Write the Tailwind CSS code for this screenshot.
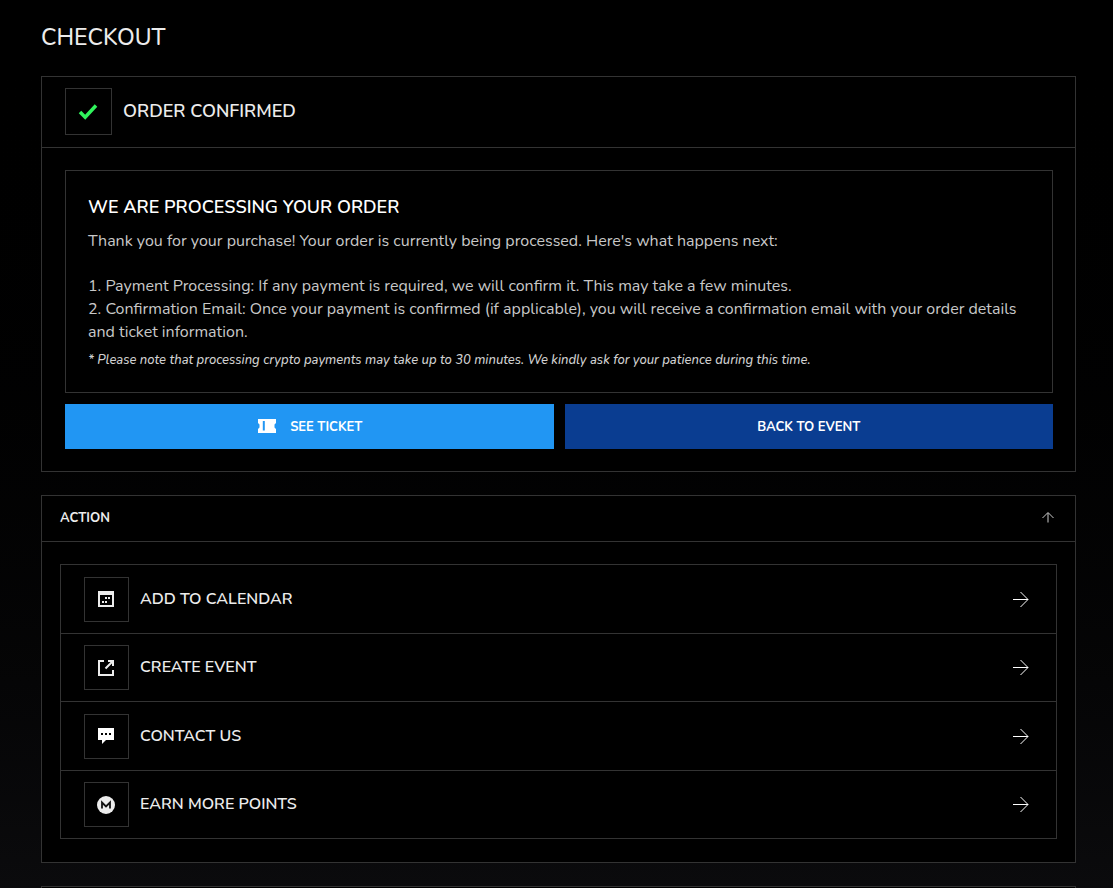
<!DOCTYPE html>
<html lang="en">
<head>
<meta charset="utf-8">
<meta name="viewport" content="width=device-width, initial-scale=1">
<title>Checkout</title>
<script src="https://cdn.jsdelivr.net/npm/@tailwindcss/browser@4"></script>
</head>
<body class="flex h-screen flex-col overflow-hidden bg-linear-to-b from-black to-[#0b0b0d] pr-[37px] pl-[41px] font-['Nunito','Noto_Sans',sans-serif] text-[#ececec]">
  <h1 class="pt-5 text-[23px] leading-9 font-medium">CHECKOUT</h1>

  <main class="mt-5 flex min-h-0 flex-1 flex-col gap-[23px]">
    <section class="shrink-0 border border-[#333] bg-black">
      <header class="flex items-center gap-[11px] border-b border-[#333] px-[23px] pt-[11px] pb-3">
        <span class="flex size-[47px] items-center justify-center border border-[#333]">
          <svg class="size-[23px]" viewBox="0 0 23 23" fill="none" stroke="#30f45c" stroke-width="3.500" aria-hidden="true"><path d="M3 12l5.200 5.200L19 5.500"/></svg>
        </span>
        <h2 class="pb-0.5 text-lg leading-7 font-semibold">ORDER CONFIRMED</h2>
      </header>
      <div class="py-[22px] pr-[22px] pl-[23px]">
        <div class="border border-[#333] p-[22px]">
          <h3 class="text-lg leading-7 font-semibold text-white">WE ARE PROCESSING YOUR ORDER</h3>
          <p class="mt-[9px] text-base leading-[23px] text-[#c8c8c8]">Thank you for your purchase! Your order is currently being processed. Here's what happens next:</p>
          <p class="mt-[22px] text-base leading-[23px] text-[#c8c8c8]">1. Payment Processing: If any payment is required, we will confirm it. This may take a few minutes.<br>2. Confirmation Email: Once your payment is confirmed (if applicable), you will receive a confirmation email with your order details and ticket information.</p>
          <p class="mt-1.5 text-[13px] leading-5 font-medium text-[#d0d0d0] italic">* Please note that processing crypto payments may take up to 30 minutes. We kindly ask for your patience during this time.</p>
        </div>
        <div class="mt-[11px] grid grid-cols-2 gap-[11px] text-[13px] font-bold text-white">
          <button type="button" class="flex h-[45px] items-center justify-center gap-3 bg-[#2196f3]">
            <svg class="size-[22px]" viewBox="0 0 22 22" fill="#fff" aria-hidden="true"><path fill-rule="evenodd" d="M2 3h18v4l-1.500 1.500v3L20 13v4H2v-4l1.500-1.500v-3L2 7zM6.800 5v9.500h2V5z"/></svg>
            <span class="pt-0.5">SEE TICKET</span>
          </button>
          <button type="button" class="flex h-[45px] items-center justify-center bg-[#0a3d91]"><span class="pt-0.5">BACK TO EVENT</span></button>
        </div>
      </div>
    </section>

    <section class="shrink-0 border border-[#333] bg-black">
      <h2 class="border-b border-[#333]">
        <button type="button" aria-expanded="true" class="flex h-[45px] w-full items-center justify-between px-[18px] pb-px text-[13px] font-bold">
          <span class="pt-px">ACTION</span>
          <svg class="size-[18px]" viewBox="0 0 18 18" fill="none" stroke="#ccc" aria-hidden="true"><path d="M9 13.500V4M3.500 9L9 3.500 14.500 9"/></svg>
        </button>
      </h2>
      <div class="px-[18px] pt-[22px] pb-[23px]">
        <nav class="divide-y divide-[#333] border border-[#333] font-semibold">
          <a href="#calendar" class="flex items-center gap-[11px] pt-3 pr-[26px] pb-[11px] pl-[23px]">
            <span class="flex size-[45px] items-center justify-center border border-[#333]">
              <svg class="size-[17px]" viewBox="0 0 17 17" fill="#ececec" aria-hidden="true"><path fill-rule="evenodd" d="M0 0h16v16H0zM2 4v10h12V4z"/><path d="M7 6h2v2H7zM10 6h2v2h-2zM4 10h2v2H4zM7 10h2v2H7z"/></svg>
            </span>
            <span class="flex-1 pb-0.5">ADD TO CALENDAR</span>
            <svg class="size-[18px]" viewBox="0 0 18 18" fill="none" stroke="#fff" aria-hidden="true"><path d="M1 8.500h15M8.500 1l7.500 7.500L8.500 16"/></svg>
          </a>
          <a href="#create" class="flex items-center gap-[11px] py-[11px] pr-[26px] pl-[23px]">
            <span class="flex size-[45px] items-center justify-center border border-[#333]">
              <svg class="size-[17px]" viewBox="0 0 17 17" fill="none" stroke="#ececec" stroke-width="2" aria-hidden="true"><path d="M6 2H1v14h14v-5M10 2h5v5M15 2L7.500 9.500"/></svg>
            </span>
            <span class="flex-1 pb-0.5">CREATE EVENT</span>
            <svg class="size-[18px]" viewBox="0 0 18 18" fill="none" stroke="#fff" aria-hidden="true"><path d="M1 8.500h15M8.500 1l7.500 7.500L8.500 16"/></svg>
          </a>
          <a href="#contact" class="flex items-center gap-[11px] pt-3 pr-[26px] pb-[11px] pl-[23px]">
            <span class="flex size-[45px] items-center justify-center border border-[#333]">
              <svg class="size-[17px]" viewBox="0 0 17 17" fill="#fff" aria-hidden="true"><path fill-rule="evenodd" d="M0 0h16v12H8l-4 4v-4H0zM3 5v2h2V5zM7 5v2h2V5zM11 5v2h2V5z"/></svg>
            </span>
            <span class="flex-1 pb-0.5">CONTACT US</span>
            <svg class="size-[18px]" viewBox="0 0 18 18" fill="none" stroke="#fff" aria-hidden="true"><path d="M1 8.500h15M8.500 1l7.500 7.500L8.500 16"/></svg>
          </a>
          <a href="#points" class="flex items-center gap-[11px] py-[11px] pr-[26px] pl-[23px]">
            <span class="flex size-[45px] items-center justify-center border border-[#333]">
              <svg class="size-[19px]" viewBox="0 0 19 19" aria-hidden="true"><circle cx="9" cy="10" r="9" fill="#ececec"/><path d="M5 13.500V7.500l4 4 4-4v6" fill="none" stroke="#111" stroke-width="1.800"/></svg>
            </span>
            <span class="flex-1 pb-0.5">EARN MORE POINTS</span>
            <svg class="size-[18px]" viewBox="0 0 18 18" fill="none" stroke="#fff" aria-hidden="true"><path d="M1 8.500h15M8.500 1l7.500 7.500L8.500 16"/></svg>
          </a>
        </nav>
      </div>
    </section>

    <section class="flex-1 border border-b-0 border-[#333] bg-black"></section>
  </main>
</body>
</html>
